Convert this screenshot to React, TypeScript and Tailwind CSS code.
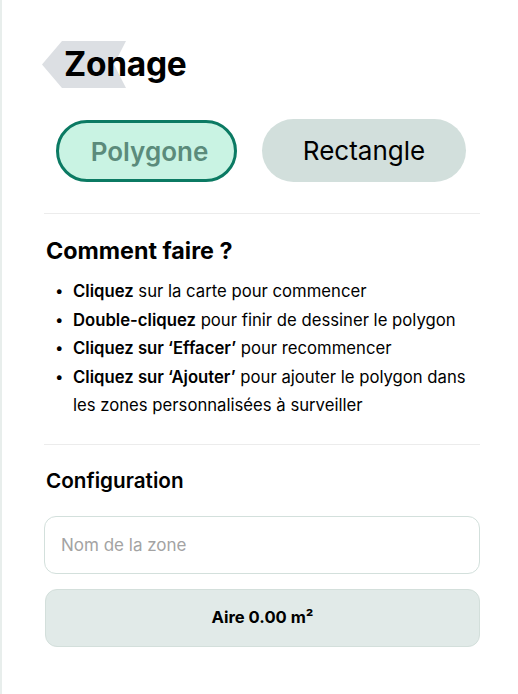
import React from "react";

const font = { fontFamily: "Inter, 'Liberation Sans', sans-serif" };

const STEPS: { bold: string; rest: string }[] = [
  { bold: "Cliquez", rest: " sur la carte pour commencer" },
  { bold: "Double-cliquez", rest: " pour finir de dessiner le polygon" },
  { bold: "Cliquez sur ‘Effacer’", rest: " pour recommencer" },
  {
    bold: "Cliquez sur ‘Ajouter’",
    rest: " pour ajouter le polygon dans les zones personnalisées à surveiller",
  },
];

export default function App() {
  return (
    <div
      className="w-[518px] h-[694px] bg-white border-l-2 border-[#e8eeec] overflow-hidden"
      style={font}
    >
      <div className="pl-[40px] pr-[38px] pt-[41px]">
        {/* Title */}
        <div className="relative h-[47px]">
          <svg
            className="absolute left-0 top-0"
            width="84"
            height="47"
            viewBox="0 0 84 47"
          >
            <polygon points="0,23.5 20,0 84,0 72,23.5 84,47 20,47" fill="#dcdfe3" />
          </svg>
          <h1 className="relative pl-[22px] pt-[4px] text-[33.5px] leading-[38px] font-bold text-black tracking-[-0.3px]">
            Zonage
          </h1>
        </div>

        {/* Mode buttons */}
        <div className="flex gap-[25px] mt-[32px] ml-[14px]">
          <button className="w-[181px] h-[62px] pl-[6px] rounded-full border-[3px] border-[#0b7a63] bg-[#c9f3e3] text-[26px] font-semibold text-[#5b8b7b]">
            Polygone
          </button>
          <button className="w-[204px] h-[63px] -mt-px rounded-full bg-[#d2dfdc] text-[26px] text-black">
            Rectangle
          </button>
        </div>

        <div className="mt-[31px] ml-[2px] h-px bg-[#ececec]" />

        {/* Instructions */}
        <h2 className="mt-[23px] ml-[4px] text-[23.3px] leading-[28px] font-bold text-black">
          Comment faire ?
        </h2>
        <ul className="mt-[12px] ml-[13px] text-[16.7px] leading-[28.5px] text-black">
          {STEPS.map((s) => (
            <li key={s.bold} className="flex">
              <span className="w-[18px] shrink-0 text-[15px]">•</span>
              <span>
                <span className="font-semibold">{s.bold}</span>
                {s.rest}
              </span>
            </li>
          ))}
        </ul>

        <div className="mt-[24px] ml-[2px] h-px bg-[#ececec]" />

        {/* Configuration */}
        <h3 className="mt-[23px] ml-[4px] text-[20.7px] leading-[26px] font-semibold text-black">
          Configuration
        </h3>
        <input
          placeholder="Nom de la zone"
          className="mt-[22px] ml-[2px] w-[436px] h-[58px] rounded-xl border border-[#d3e0dc] px-[16px] text-[17px] placeholder:text-[#a3a3a3] outline-none"
        />
        <div className="mt-[15px] ml-[3px] w-[435px] h-[58px] rounded-xl border border-[#d3dfdb] bg-[#e1eae8] flex items-center justify-center text-[16.6px] font-bold text-black">
          Aire 0.00 m²
        </div>
      </div>
    </div>
  );
}
